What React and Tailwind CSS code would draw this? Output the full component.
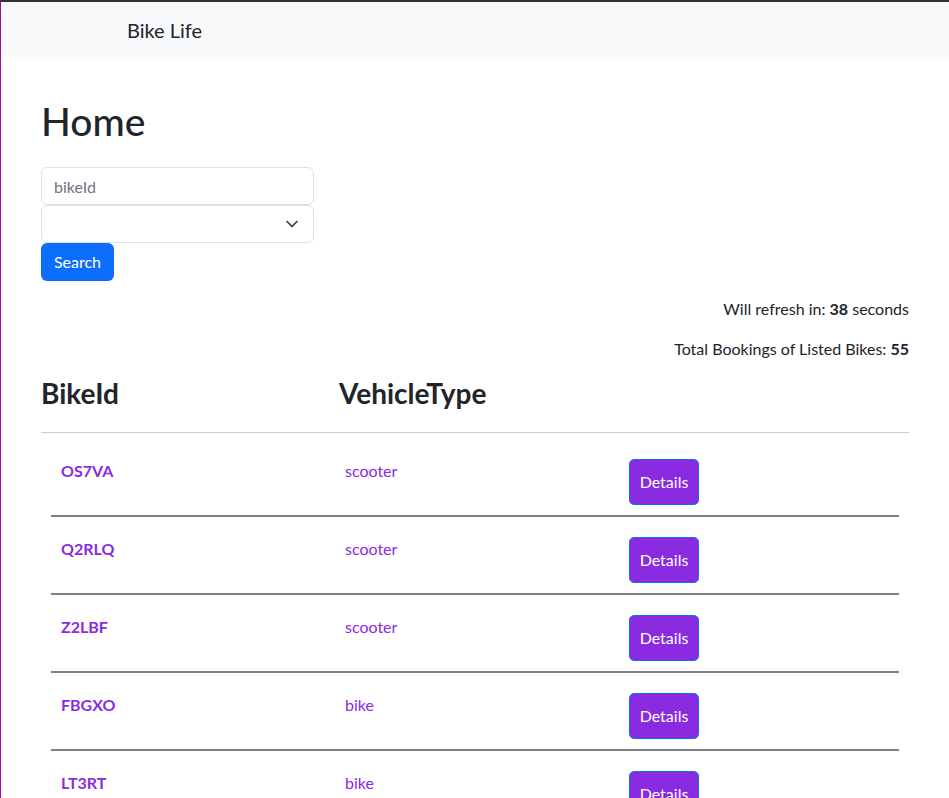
import React from "react";

const rows = [
  ["OS7VA", "scooter"],
  ["Q2RLQ", "scooter"],
  ["Z2LBF", "scooter"],
  ["FBGXO", "bike"],
  ["LT3RT", "bike"],
];

export default function App() {
  return (
    <div
      className="min-h-[798px] bg-white border-t-2 border-l border-t-[#333333] border-l-[#a010a0] text-[#212529]"
      style={{ fontFamily: "Lato, 'Noto Sans', sans-serif" }}
    >
      <nav className="h-[55px] bg-[#f8f9fa] flex items-center pl-[126px]">
        <span className="text-[20px] leading-[30px]">Bike Life</span>
      </nav>
      <main className="px-10">
        <h1 className="text-[39px] leading-[48px] font-medium mt-[40px]">Home</h1>
        <div className="mt-[22px] w-[273px] flex flex-col">
          <input
            placeholder="bikeId"
            className="h-[38px] border border-[#dee2e6] rounded-[6px] px-3 text-[16px] placeholder:text-[#6c757d] outline-none"
          />
          <div className="h-[38px] border border-[#dee2e6] rounded-[6px] px-3 flex items-center justify-end">
            <svg width="14" height="10" viewBox="0 0 16 12" className="mr-[2px]">
              <path d="M2 3l6 6 6-6" fill="none" stroke="#343a40" strokeWidth="2" strokeLinecap="round" strokeLinejoin="round" />
            </svg>
          </div>
        </div>
        <button className="h-[38px] w-[73px] rounded-[6px] bg-[#0d6efd] text-white text-[16px] flex items-center justify-center">
          Search
        </button>
        <p className="mt-4 text-right text-[16px] leading-6">
          Will refresh in: <b>38</b> seconds
        </p>
        <p className="mt-4 text-right text-[16px] leading-6">
          Total Bookings of Listed Bikes: <b>55</b>
        </p>
        <div className="mt-[15px] flex pb-[22px] border-b border-[#cccccc] text-[28px] leading-[34px] font-bold">
          <div className="w-[298px]">BikeId</div>
          <div>VehicleType</div>
        </div>
        <div className="mx-[10px] mt-[6px]">
          {rows.map(([id, type]) => (
            <div key={id} className="flex border-b-2 border-[#808080] pt-5 pb-[10px]">
              <div className="w-[284px] pl-[10px] text-[16px] leading-6 font-bold text-[#8a2be2]">{id}</div>
              <div className="w-[284px] pl-[10px] text-[16px] leading-6 text-[#8a2be2]">{type}</div>
              <div className="pl-[10px]">
                <button className="h-[46px] w-[70px] bg-[#8a2be2] border border-[#0d6efd] rounded-[5px] text-white text-[16px]">
                  Details
                </button>
              </div>
            </div>
          ))}
        </div>
      </main>
    </div>
  );
}
